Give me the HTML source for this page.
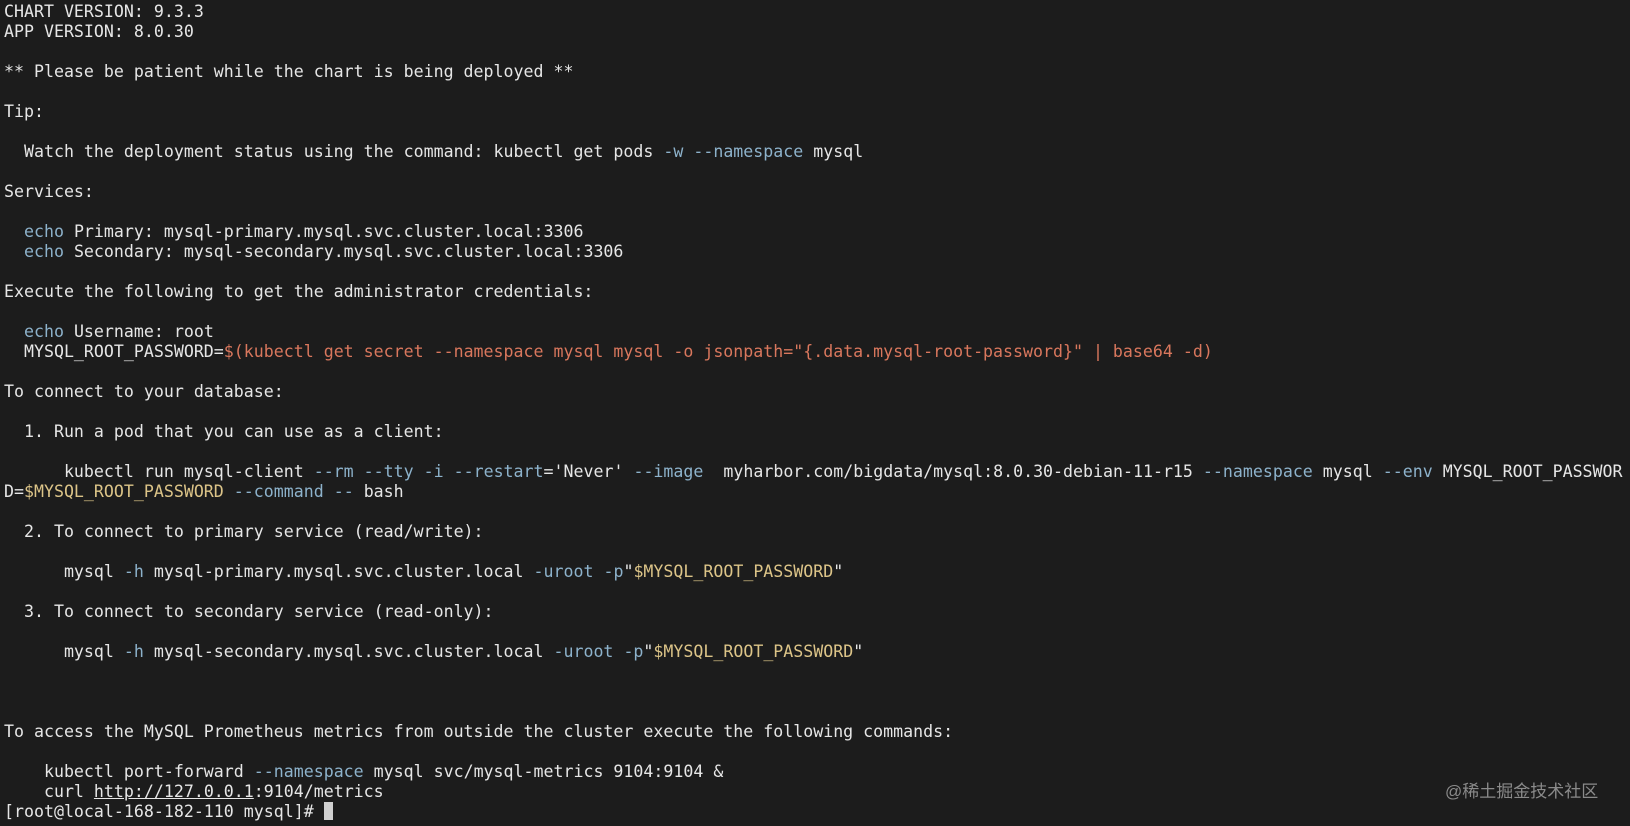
<!DOCTYPE html>
<html><head><meta charset="utf-8"><style>
html,body{margin:0;padding:0;background:#1c1c1c;width:1630px;height:826px;overflow:hidden}
pre{margin:0;padding:2px 0 0 4px;font-family:"DejaVu Sans Mono","Liberation Mono",monospace;font-size:16.6px;line-height:20px;color:#e6e6e6;white-space:pre}
.b{color:#8db2cb}.o{color:#d9775d}.y{color:#dcc488}
.cur{display:inline-block;width:9px;height:18px;background:#d0d0d0;vertical-align:-3px}
.wm{position:absolute;left:1445px;top:777px;font-family:"Liberation Sans","Noto Sans CJK SC",sans-serif;font-size:17px;color:#8a8a8a}
</style></head><body>
<pre>CHART VERSION: 9.3.3
APP VERSION: 8.0.30

** Please be patient while the chart is being deployed **

Tip:

  Watch the deployment status using the command: kubectl get pods <span class="b">-w</span> <span class="b">--namespace</span> mysql

Services:

  <span class="b">echo</span> Primary: mysql-primary.mysql.svc.cluster.local:3306
  <span class="b">echo</span> Secondary: mysql-secondary.mysql.svc.cluster.local:3306

Execute the following to get the administrator credentials:

  <span class="b">echo</span> Username: root
  MYSQL_ROOT_PASSWORD=<span class="o">$(kubectl get secret --namespace mysql mysql -o jsonpath="{.data.mysql-root-password}" | base64 -d)</span>

To connect to your database:

  1. Run a pod that you can use as a client:

      kubectl run mysql-client <span class="b">--rm</span> <span class="b">--tty</span> <span class="b">-i</span> <span class="b">--restart</span>='Never' <span class="b">--image</span>  myharbor.com/bigdata/mysql:8.0.30-debian-11-r15 <span class="b">--namespace</span> mysql <span class="b">--env</span> MYSQL_ROOT_PASSWOR
D=<span class="y">$MYSQL_ROOT_PASSWORD</span> <span class="b">--command</span> <span class="b">--</span> bash

  2. To connect to primary service (read/write):

      mysql <span class="b">-h</span> mysql-primary.mysql.svc.cluster.local <span class="b">-uroot</span> <span class="b">-p</span>"<span class="y">$MYSQL_ROOT_PASSWORD</span>"

  3. To connect to secondary service (read-only):

      mysql <span class="b">-h</span> mysql-secondary.mysql.svc.cluster.local <span class="b">-uroot</span> <span class="b">-p</span>"<span class="y">$MYSQL_ROOT_PASSWORD</span>"



To access the MySQL Prometheus metrics from outside the cluster execute the following commands:

    kubectl port-forward <span class="b">--namespace</span> mysql svc/mysql-metrics 9104:9104 &amp;
    curl <u>http://127.0.0.1</u>:9104/metrics
[root@local-168-182-110 mysql]# <span class="cur"></span></pre>
<div class="wm">@稀土掘金技术社区</div>
</body></html>
